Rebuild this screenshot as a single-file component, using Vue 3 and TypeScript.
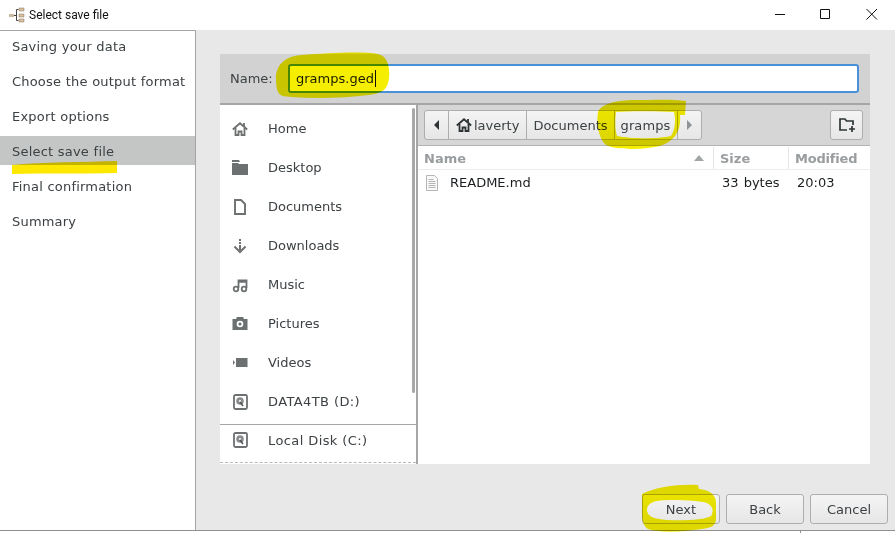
<script setup lang="ts">
const steps = ['Saving your data', 'Choose the output format', 'Export options', 'Select save file', 'Final confirmation', 'Summary']
const places = [
  { name: 'Home', icon: 'home' },
  { name: 'Desktop', icon: 'folder' },
  { name: 'Documents', icon: 'doc' },
  { name: 'Downloads', icon: 'down' },
  { name: 'Music', icon: 'music' },
  { name: 'Pictures', icon: 'camera' },
  { name: 'Videos', icon: 'video' },
  { name: 'DATA4TB (D:)', icon: 'disk' },
]
</script>

<template>
  <div class="window">
    <header class="titlebar">
      <svg class="app-icon" width="16" height="16" viewBox="0 0 16 16">
        <path d="M0 7h5v3H0z" fill="#c9b8a2" />
        <path d="M5 8.500h3M7.500 2.500v11M7.500 2.500h2M7.500 13.500h2" stroke="#444" fill="none" />
        <path d="M10 1h5v3h-5zM10 7h5v3h-5zM10 12h5v3h-5z" fill="#d8bf9c" stroke="#8a7a66" stroke-width=".5" />
      </svg>
      <span class="title">Select save file</span>
      <div class="controls">
        <svg width="46" height="30" viewBox="0 0 46 30"><path d="M18 14.500h10" stroke="#111" /></svg>
        <svg width="46" height="30" viewBox="0 0 46 30"><path d="M17.500 9.500h9v9h-9z" stroke="#111" fill="none" /></svg>
        <svg width="46" height="30" viewBox="0 0 46 30"><path d="M17.500 9l10.500 10.500M28 9L17.500 19.500" stroke="#111" fill="none" /></svg>
      </div>
    </header>

    <div class="body">
      <aside class="steps">
        <div v-for="s in steps" :key="s" class="step" :class="{ current: s === 'Select save file' }">{{ s }}</div>
      </aside>

      <main class="main">
        <section class="chooser">
          <div class="name-row">
            <label class="name-label">Name:</label>
            <div class="name-entry">gramps.ged<span class="caret"></span></div>
          </div>

          <div class="panes">
            <nav class="sidebar">
              <div class="places">
                <div v-for="p in places" :key="p.name" class="place">
                  <svg class="place-icon" width="16" height="16" viewBox="0 0 16 16">
                    <g v-if="p.icon === 'home'" fill="none" stroke="#6d7071" stroke-width="1.800">
                      <path d="M0.800 8.500L8 2.200l7.200 6.300" />
                      <path d="M3.500 7v7h3v-3.500h3V14h3V7" />
                      <path d="M12 2v3" />
                    </g>
                    <g v-else-if="p.icon === 'folder'" fill="#6d7071">
                      <path d="M0 0h7l1 2H0z" />
                      <path d="M0 3h6l1 1h9v11H0z" />
                    </g>
                    <path v-else-if="p.icon === 'doc'" d="M3 1h6l4 4v10H3z" fill="none" stroke="#6d7071" stroke-width="1.900" />
                    <g v-else-if="p.icon === 'down'" fill="#6d7071">
                      <path d="M7 1h2v2H7zM7 4h2v2H7zM7 7h2v5H7z" />
                      <path d="M2.500 8.500L8 14l5.500-5.500" fill="none" stroke="#6d7071" stroke-width="2" />
                    </g>
                    <g v-else-if="p.icon === 'music'" fill="none" stroke="#6d7071" stroke-width="1.800">
                      <path d="M6.500 11V3.500h8V11" />
                      <path d="M6.500 4.500h8" stroke-width="2.500" />
                      <circle cx="4" cy="12" r="2.300" />
                      <circle cx="12" cy="12" r="2.300" />
                    </g>
                    <g v-else-if="p.icon === 'camera'">
                      <path d="M5 1h6l1 2h3.500v11H.5V3H4z" fill="#6d7071" />
                      <circle cx="8" cy="8" r="3.300" fill="#fff" />
                      <circle cx="8" cy="8" r="1.600" fill="#6d7071" />
                    </g>
                    <path v-else-if="p.icon === 'video'" d="M1 5l2 2.500L1 10zM4 3h11.500v9H4z" fill="#6d7071" />
                    <g v-else>
                      <rect x="2" y="1" width="13" height="14" rx="1.500" fill="#fff" stroke="#6d7071" stroke-width="1.800" />
                      <circle cx="8" cy="7" r="3.800" fill="#8a8d8e" />
                      <circle cx="8" cy="7" r="1.100" fill="#fff" />
                      <path d="M8 8l3 4" stroke="#555" stroke-width="1.600" />
                    </g>
                  </svg>
                  <span :class="{ spaced: p.icon === 'disk' }">{{ p.name }}</span>
                </div>
              </div>
              <div class="mounts">
                <div class="place mount">
                  <svg class="place-icon" width="16" height="16" viewBox="0 0 16 16">
                    <rect x="2" y="1" width="13" height="14" rx="1.500" fill="#fff" stroke="#6d7071" stroke-width="1.800" />
                    <circle cx="8" cy="7" r="3.800" fill="#8a8d8e" />
                    <circle cx="8" cy="7" r="1.100" fill="#fff" />
                    <path d="M8 8l3 4" stroke="#555" stroke-width="1.600" />
                  </svg>
                  <span class="spaced">Local Disk (C:)</span>
                </div>
              </div>
              <div class="thumb"></div>
            </nav>

            <div class="files">
              <div class="pathbar">
                <div class="crumbs">
                  <button class="crumb arrow">
                    <svg width="7" height="10" viewBox="0 0 7 10"><path d="M6 0v10L1 5z" fill="#2e3436" /></svg>
                  </button>
                  <button class="crumb home-crumb">
                    <svg width="16" height="16" viewBox="0 0 16 16" fill="none" stroke="#2e3436" stroke-width="1.800">
                      <path d="M0.800 8.500L8 2.200l7.200 6.300" />
                      <path d="M3.500 7v7h3v-3.500h3V14h3V7" />
                      <path d="M12 2v3" />
                    </svg>
                    laverty
                  </button>
                  <button class="crumb">Documents</button>
                  <button class="crumb last-name">gramps</button>
                  <button class="crumb arrow dim">
                    <svg width="7" height="10" viewBox="0 0 7 10"><path d="M1 0v10l5-5z" fill="#8f9396" /></svg>
                  </button>
                </div>
                <button class="new-folder">
                  <svg width="18" height="16" viewBox="0 0 18 16" fill="none" stroke="#2e3436" stroke-width="1.700">
                    <path d="M9 13H2V2h5l1.500 2H15v4" />
                    <path d="M14 9v6M11 12h6" />
                  </svg>
                </button>
              </div>

              <div class="list-head">
                <div class="col col-name">Name
                  <svg width="10" height="6" viewBox="0 0 10 6"><path d="M0 6l5-6 5 6z" fill="#a2a5a6" /></svg>
                </div>
                <div class="col col-size">Size</div>
                <div class="col col-mod">Modified</div>
              </div>
              <div class="file-row">
                <div class="cell-name">
                  <svg width="16" height="18" viewBox="0 0 16 18" fill="none" stroke="#b4b6b6">
                    <path d="M2.500 1.500h8l3 3v12h-11z" fill="#fafafa" />
                    <path d="M4.500 5.500h5M4.500 7.500h7M4.500 9.500h7M4.500 11.500h7M4.500 13.500h7" />
                  </svg>
                  README.md
                </div>
                <div class="cell-size">33 bytes</div>
                <div class="cell-mod">20:03</div>
              </div>
            </div>
          </div>
        </section>

        <footer class="actions">
          <button class="btn">Next</button>
          <button class="btn">Back</button>
          <button class="btn">Cancel</button>
        </footer>
      </main>
    </div>
    <div class="edge-tick"></div>

    <svg class="ink" width="896" height="533" viewBox="0 0 896 533">
      <g fill="#f5ee00">
        <path d="M276 78c0-14 10-22 26-23 26-2 60-4 76-1 10 2 12 14 11 24-1 11-6 15-20 17-24 3-52 4-78 2-10-1-15 0-15-19z" />
        <path d="M12 165c30-3 70-3 105-4v12c-35 1-70 0-105 1z" fill="#ffe800" />
        <path fill-rule="evenodd" d="M598 112c3-8 18-12 38-12 16 0 36-1 50 1l-1 14h-5c1 12-2 25-20 31-18 4-44 4-54-1-7-6-10-20-8-33zM616 112c-1 8-1 18 1 24 14 3 42 3 54 0 4-6 5-16 3-24-16-1-44-1-58 0z" />
        <path fill-rule="evenodd" d="M642 494c14-7 36-10 56-9l1 4c10 1 17 5 17 14v16c0 6-4 9-14 10-20 3-42 4-54 0-4-2-6-8-6-14zM647 510c0 6 6 9 20 10 16 1 38 0 44-4 3-5 2-10-4-13-8-3-40-4-50-2-6 1-10 4-10 9z" />
      </g>
    </svg>
  </div>
</template>

<style scoped>
.window {
  position: relative;
  width: 895px;
  height: 533px;
  background: #fff;
  font-family: "DejaVu Sans", sans-serif;
  font-size: 13px;
  color: #2e3436;
  overflow: hidden;
}
.titlebar {
  display: flex;
  align-items: center;
  height: 30px;
  padding-left: 9px;
  background: #fff;
}
.app-icon { margin-right: 4px; }
.title {
  font-family: Roboto, sans-serif;
  font-size: 12px;
  color: #111;
}
.controls {
  display: flex;
  margin-left: auto;
}
.body {
  display: flex;
  height: 500px;
  border-bottom: 1px solid #8f8f8f;
}
.steps {
  flex: 0 0 195px;
  border-top: 1px solid #a4a4a4;
  border-right: 1px solid #a4a4a4;
  background: #fff;
}
.step {
  display: flex;
  align-items: center;
  height: 29px;
  margin-bottom: 6px;
  padding: 2px 0 0 12px;
  box-sizing: border-box;
  color: #3c4144;
  letter-spacing: 0.2px;
  word-spacing: 0.2px;
}
.step.current { background: #c4c6c5; }
.main {
  flex: 1;
  display: flex;
  flex-direction: column;
  background: #e8e8e8;
  padding: 24px 25px 0 24px;
}
.chooser {
  display: flex;
  flex-direction: column;
  height: 410px;
}
.name-row {
  display: flex;
  align-items: center;
  height: 49px;
  flex: none;
  padding-left: 10px;
  background: #d2d2d2;
  border-bottom: 2px solid #a6a6a6;
}
.name-label { width: 58px; color: #3c4144; }
.name-entry {
  display: flex;
  align-items: center;
  width: 561px;
  height: 25px;
  padding-left: 6px;
  background: #fff;
  border: 2px solid #4a90d9;
  border-radius: 3px;
  color: #1b1e20;
}
.caret { width: 1px; height: 17px; background: #111; margin-left: 1px; }
.panes {
  flex: 1;
  display: flex;
  min-height: 0;
}
.sidebar {
  position: relative;
  flex: 0 0 196px;
  background: #fff;
  border-right: 2px solid #a6a6a6;
  overflow: hidden;
}
.places { height: 319px; padding-top: 4px; box-sizing: border-box; }
.place {
  display: flex;
  align-items: center;
  height: 39px;
  color: #3c4144;
}
.place.mount { height: 30px; }
.spaced { letter-spacing: 0.4px; }
.place-icon { margin: 0 20px 0 12px; flex: none; }
.mounts {
  border-top: 1px solid #a6a6a6;
  border-bottom: 1px dashed #b8b8b8;
  height: 37px;
}
.thumb {
  position: absolute;
  right: 1px;
  top: 3px;
  width: 3px;
  height: 285px;
  background: #a8a8a8;
  border-radius: 2px;
}
.files {
  flex: 1;
  display: flex;
  flex-direction: column;
  background: #fff;
}
.pathbar {
  display: flex;
  align-items: center;
  justify-content: space-between;
  height: 41px;
  flex: none;
  padding: 0 7px 0 6px;
  background: #d6d6d6;
  border-bottom: 1px solid #b4b4b4;
  box-sizing: border-box;
}
.crumbs { display: flex; }
.crumb, .new-folder, .btn {
  font: inherit;
  color: #3c4144;
  border: 1px solid #aeaeae;
  background: linear-gradient(#f4f4f4, #e6e6e6);
}
.crumb {
  display: flex;
  align-items: center;
  height: 30px;
  padding: 0 6px;
  margin-left: -1px;
}
.crumb:first-child { margin-left: 0; border-radius: 3px 0 0 3px; }
.crumb:last-child { border-radius: 0 3px 3px 0; }
.arrow { width: 25px; justify-content: center; padding: 0; }
.home-crumb { gap: 2px; padding: 0 7px 0 7px; }
.last-name { padding: 0 7px 0 6px; letter-spacing: 0.1px; }
.new-folder {
  display: flex;
  align-items: center;
  justify-content: center;
  width: 33px;
  height: 30px;
  padding: 0;
  border-radius: 3px;
}
.list-head {
  display: flex;
  height: 24px;
  flex: none;
  padding-top: 1px;
  font-weight: 700;
  color: #9a9d9f;
  border-bottom: 1px solid #ececec;
  box-sizing: border-box;
}
.col {
  display: flex;
  align-items: center;
  justify-content: space-between;
  padding: 0 6px;
  box-sizing: border-box;
  border-right: 1px solid #e6e6e6;
}
.col-name { width: 296px; padding-right: 9px; }
.col-size { width: 75px; }
.col-mod { width: 81px; border-right: 0; letter-spacing: -0.2px; }
.file-row {
  display: flex;
  align-items: center;
  height: 25px;
  color: #1b1e20;
}
.cell-name {
  display: flex;
  align-items: center;
  gap: 10px;
  width: 304px;
  padding-left: 6px;
  box-sizing: border-box;
}
.cell-size { width: 75px; word-spacing: 1px; }
.actions {
  display: flex;
  justify-content: flex-end;
  gap: 6px;
  padding-top: 30px;
  margin-right: -18px;
}
.btn {
  width: 78px;
  height: 30px;
  padding: 0;
  border-radius: 3px;
}
.edge-tick {
  position: absolute;
  left: 800px;
  top: 531px;
  width: 1px;
  height: 2px;
  background: #8f8f8f;
}
.ink {
  position: absolute;
  left: 0;
  top: 0;
  mix-blend-mode: multiply;
  pointer-events: none;
}
</style>
